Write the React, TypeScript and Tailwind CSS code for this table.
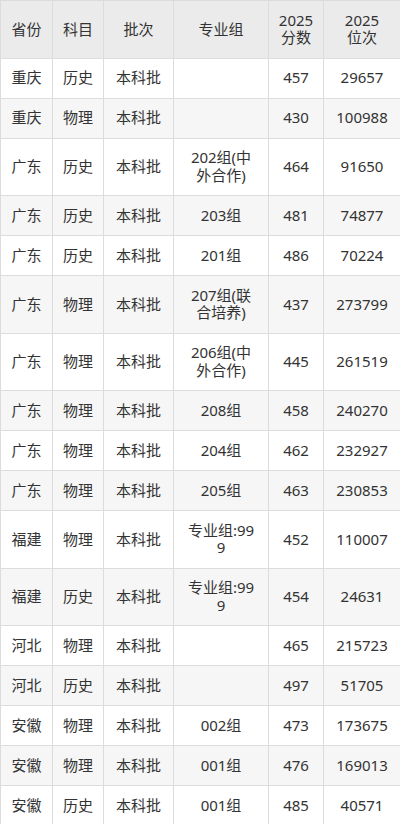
const rows: [string, string, string, string, string, string][] = [
  ["重庆", "历史", "本科批", "", "457", "29657"],
  ["重庆", "物理", "本科批", "", "430", "100988"],
  ["广东", "历史", "本科批", "202组(中外合作)", "464", "91650"],
  ["广东", "历史", "本科批", "203组", "481", "74877"],
  ["广东", "历史", "本科批", "201组", "486", "70224"],
  ["广东", "物理", "本科批", "207组(联合培养)", "437", "273799"],
  ["广东", "物理", "本科批", "206组(中外合作)", "445", "261519"],
  ["广东", "物理", "本科批", "208组", "458", "240270"],
  ["广东", "物理", "本科批", "204组", "462", "232927"],
  ["广东", "物理", "本科批", "205组", "463", "230853"],
  ["福建", "物理", "本科批", "专业组:999", "452", "110007"],
  ["福建", "历史", "本科批", "专业组:999", "454", "24631"],
  ["河北", "物理", "本科批", "", "465", "215723"],
  ["河北", "历史", "本科批", "", "497", "51705"],
  ["安徽", "物理", "本科批", "002组", "473", "173675"],
  ["安徽", "物理", "本科批", "001组", "476", "169013"],
  ["安徽", "历史", "本科批", "001组", "485", "40571"],
];

const base = "border border-[#dcdcdc] py-[10.75px] text-center align-middle font-normal";
const tight = `${base} px-[2px] whitespace-nowrap`;
const group = `${base} px-[11px] break-all`;

export default function App() {
  return (
    <div className="w-[400px] bg-white text-[#333] text-[15px] leading-[17.5px] font-['Noto_Sans','Noto_Sans_CJK_SC',sans-serif]">
      <table className="w-[400px] table-fixed border-collapse">
        <colgroup>
          <col className="w-[52px]" />
          <col className="w-[51px]" />
          <col className="w-[70px]" />
          <col className="w-[95px]" />
          <col className="w-[55px]" />
          <col className="w-[77px]" />
        </colgroup>
        <thead>
          <tr className="bg-[#ebebeb]">
            <th className={tight}>省份</th>
            <th className={tight}>科目</th>
            <th className={tight}>批次</th>
            <th className={group}>专业组</th>
            <th className={tight}>
              2025
              <br />
              分数
            </th>
            <th className={tight}>
              2025
              <br />
              位次
            </th>
          </tr>
        </thead>
        <tbody>
          {rows.map((r, i) => (
            <tr key={i} className={i % 2 === 1 ? "bg-[#f6f6f6]" : "bg-white"}>
              {r.map((v, j) => (
                <td key={j} className={j === 3 ? group : tight}>
                  {v}
                </td>
              ))}
            </tr>
          ))}
        </tbody>
      </table>
    </div>
  );
}
